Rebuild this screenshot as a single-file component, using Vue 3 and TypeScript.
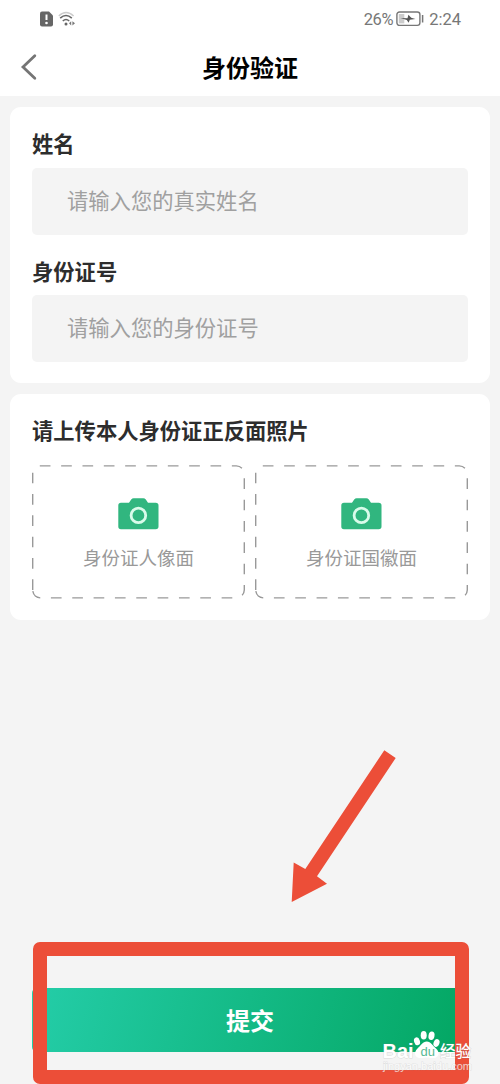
<script setup lang="ts">
import { reactive } from 'vue'

interface Field {
  key: 'name' | 'idNumber'
  label: string
  placeholder: string
}

const form = reactive({ name: '', idNumber: '' })

const fields: Field[] = [
  { key: 'name', label: '姓名', placeholder: '请输入您的真实姓名' },
  { key: 'idNumber', label: '身份证号', placeholder: '请输入您的身份证号' },
]

const sides: string[] = ['身份证人像面', '身份证国徽面']
</script>

<template>
  <main class="screen">
    <header class="top">
      <div class="status">
        <svg class="sim" viewBox="0 0 13 16" width="13" height="16">
          <path d="M2 0.5H9L13 4.5V13.5Q13 15.5 11 15.5H2Q0 15.5 0 13.5V2.5Q0 0.5 2 0.5Z" fill="#666" />
          <path d="M6.5 3.5V9" stroke="#fff" stroke-width="2" />
          <circle cx="6.5" cy="12" r="1.3" fill="#fff" />
        </svg>
        <svg class="wifi" viewBox="0 0 18 16" width="18" height="16" fill="none">
          <path d="M0.8 5Q8 -2 15.6 5" stroke="#ccc" stroke-width="1.5" />
          <path d="M2.2 7.2Q8 1.8 13.8 7.2" stroke="#666" stroke-width="1.6" />
          <path d="M4.8 10Q8 7 11.2 10" stroke="#666" stroke-width="1.6" />
          <circle cx="8" cy="13" r="1.5" fill="#666" />
          <path d="M11 12.3L13.2 10.2V14.4ZM17 12.3L14.4 10.2V14.4Z" fill="#777" />
        </svg>
        <span class="percent">26%</span>
        <svg class="battery" viewBox="0 0 28 16" width="28" height="16">
          <rect x="0.9" y="1" width="23" height="13.4" rx="2.6" fill="none" stroke="#777" stroke-width="1.4" />
          <rect x="2.8" y="3" width="5.5" height="9.4" fill="#ccc" />
          <path d="M4.5 7L11.5 7.2L12.4 3.8L15.2 6.7L19.4 8L13.8 8.8L12.6 11.8L10.8 8.9Z" fill="#555" />
          <path d="M26.6 4V11.5" stroke="#777" stroke-width="1.5" />
        </svg>
        <span class="clock">2:24</span>
      </div>
      <div class="nav">
        <button class="back" aria-label="返回">
          <svg viewBox="0 0 18 28" width="18" height="28">
            <path d="M14.8 2.7L3 14L14.8 25.3" fill="none" stroke="#757575" stroke-width="2.8" stroke-linecap="round" stroke-linejoin="miter" />
          </svg>
        </button>
        <h1>身份验证</h1>
      </div>
    </header>

    <section class="card identity">
      <label v-for="field in fields" :key="field.key" class="field">
        <span class="label">{{ field.label }}</span>
        <input v-model="form[field.key]" type="text" :placeholder="field.placeholder" />
      </label>
    </section>

    <section class="card photos">
      <h2 class="label">请上传本人身份证正反面照片</h2>
      <div class="uploads">
        <button v-for="side in sides" :key="side" class="upload">
          <svg class="outline" viewBox="0 0 213 134" width="213" height="134">
            <g fill="none" stroke="#999" stroke-width="1.4" stroke-dasharray="10.67 10.67">
              <path d="M7.8 0.9H204.3A8 8 0 0 1 212.3 8.9V125A8 8 0 0 1 206 132.6" />
              <path d="M200.3 132.9H8.7A8 8 0 0 1 0.7 124.9" />
              <path d="M0.7 125V6.5" />
            </g>
          </svg>
          <svg class="camera" viewBox="0 0 41 32" width="41" height="32">
            <path d="M3 4.8H11L13.2 1.5Q14.2 0.2 15.7 0.2H25.3Q26.8 0.2 27.8 1.5L30 4.8H37.7Q40.5 4.8 40.5 7.6V28.5Q40.5 31.2 37.7 31.2H3Q0.3 31.2 0.3 28.5V7.6Q0.3 4.8 3 4.8Z" fill="#31b67f" />
            <circle cx="20.4" cy="17.4" r="7.3" fill="none" stroke="#d9fbea" stroke-width="2.8" />
          </svg>
          <span>{{ side }}</span>
        </button>
      </div>
    </section>

    <footer class="bottom">
      <button class="submit">提交</button>
    </footer>

    <svg class="arrow" viewBox="0 0 106 154" width="106" height="154">
      <path d="M94.3 1.3L105.7 9L27 127.3L37 134.8L1.7 153L3.7 113.5L15.3 120Z" fill="#ec4e38" />
    </svg>
    <div class="frame"></div>
    <svg class="watermark" viewBox="0 0 120 50" width="120" height="50">
      <g fill="#fff">
        <text x="2.5" y="27.5" class="brand" textLength="31" lengthAdjust="spacingAndGlyphs">Bai</text>
        <ellipse cx="37" cy="11.3" rx="2.9" ry="4" transform="rotate(-18 37 11.3)" />
        <ellipse cx="43.7" cy="5.3" rx="3" ry="4.3" />
        <ellipse cx="51.5" cy="5.8" rx="3" ry="4.3" transform="rotate(10 51.5 5.8)" />
        <ellipse cx="56.5" cy="13" rx="2.9" ry="4" transform="rotate(20 56.5 13)" />
        <path d="M46.8 11.5C51 11.5 52.4 15.5 56 18.5C60.5 22.5 58.8 28 53.5 28C50 28 48.5 27.4 46.8 27.4C45 27.4 43.5 28 40 28C34.8 28 33.3 22.5 37.5 18.5C41 15.5 42.5 11.5 46.8 11.5Z" />
        <text x="60" y="27" class="suffix" textLength="31">经验</text>
        <text x="3" y="40" class="site" textLength="89" lengthAdjust="spacingAndGlyphs">jingyan.baidu.com</text>
      </g>
      <text x="40.5" y="25.8" class="du">du</text>
    </svg>
  </main>
</template>

<style>
body {
  margin: 0;
  background: #f4f4f4;
}
</style>

<style scoped>
.screen {
  position: relative;
  box-sizing: border-box;
  width: 500px;
  height: 1084px;
  overflow: hidden;
  display: flex;
  flex-direction: column;
  background: #f4f4f4;
  font-family: "Noto Sans CJK SC", sans-serif;
  color: #2d2d2d;
}

button {
  padding: 0;
  border: 0;
  background: none;
  font: inherit;
}

.top {
  height: 96px;
  flex: none;
  background: #fff;
}

.status {
  height: 38px;
  display: flex;
  align-items: center;
  padding: 0 39px 0 40px;
  font-family: Roboto, sans-serif;
  font-size: 16.5px;
  color: #777;
}

.wifi {
  margin-left: 5px;
}

.percent {
  margin-left: auto;
  letter-spacing: -0.4px;
}

.battery {
  margin: 0 5px 0 3px;
}

.nav {
  height: 58px;
  display: grid;
  grid-template-columns: 60px 1fr 60px;
  align-items: center;
}

.back {
  height: 28px;
  padding-left: 20px;
  text-align: left;
}

.back svg {
  display: block;
}

h1 {
  margin: 0;
  text-align: center;
  font-size: 24px;
  line-height: 36px;
  font-weight: 700;
  color: #000;
}

.card {
  flex: none;
  box-sizing: border-box;
  margin: 0 10px;
  padding: 0 22px;
  border-radius: 11px;
  background: #fff;
}

.identity {
  height: 276px;
  margin-top: 11px;
  padding-top: 20px;
}

.field {
  display: block;
  height: 127.5px;
}

.label {
  display: block;
  margin: 0;
  font-size: 21.3px;
  line-height: 32px;
  font-weight: 700;
}

input {
  display: block;
  box-sizing: border-box;
  width: 100%;
  height: 67px;
  margin-top: 8.5px;
  padding: 0 35px 4px;
  border: 0;
  border-radius: 5px;
  outline: 0;
  background: #f4f4f4;
  font-family: inherit;
  font-size: 21.3px;
  color: #2d2d2d;
}

input::placeholder {
  color: #a0a0a0;
  opacity: 1;
}

.photos {
  height: 226px;
  margin-top: 11px;
  padding-top: 20px;
}

.uploads {
  display: flex;
  justify-content: space-between;
  margin-top: 19px;
}

.upload {
  position: relative;
  width: 213px;
  height: 134px;
  display: flex;
  flex-direction: column;
  align-items: center;
  padding-top: 33px;
  box-sizing: border-box;
  font-size: 18.5px;
  line-height: 28px;
  color: #999;
}

.outline {
  position: absolute;
  inset: 0;
}

.camera {
  flex: none;
  margin-bottom: 13px;
}

.bottom {
  margin-top: auto;
  padding: 0 32px 32px;
}

.submit {
  display: block;
  width: 100%;
  height: 64px;
  border-radius: 5px;
  background: linear-gradient(105deg, #24cda8, #03a662);
  color: #fff;
  font-size: 24px;
  font-weight: 700;
  line-height: 64px;
}

.arrow {
  position: absolute;
  left: 290px;
  top: 749px;
}

.frame {
  position: absolute;
  left: 33px;
  top: 942px;
  box-sizing: border-box;
  width: 436px;
  height: 142px;
  border: 14px solid #ec4e38;
  border-radius: 7px;
}

.watermark {
  position: absolute;
  left: 380px;
  top: 1030px;
}

.brand {
  font: 700 20px "Liberation Sans", sans-serif;
}

.suffix {
  font: 500 15.5px "Noto Sans CJK SC", sans-serif;
}

.site {
  font: 400 11px "Liberation Sans", sans-serif;
  opacity: 0.7;
}

.brand,
.suffix,
.site {
  paint-order: stroke;
  stroke: rgba(130, 130, 130, 0.22);
  stroke-width: 1.2px;
}

.du {
  font: 400 13px "Liberation Sans", sans-serif;
  fill: #58b994;
}
</style>
